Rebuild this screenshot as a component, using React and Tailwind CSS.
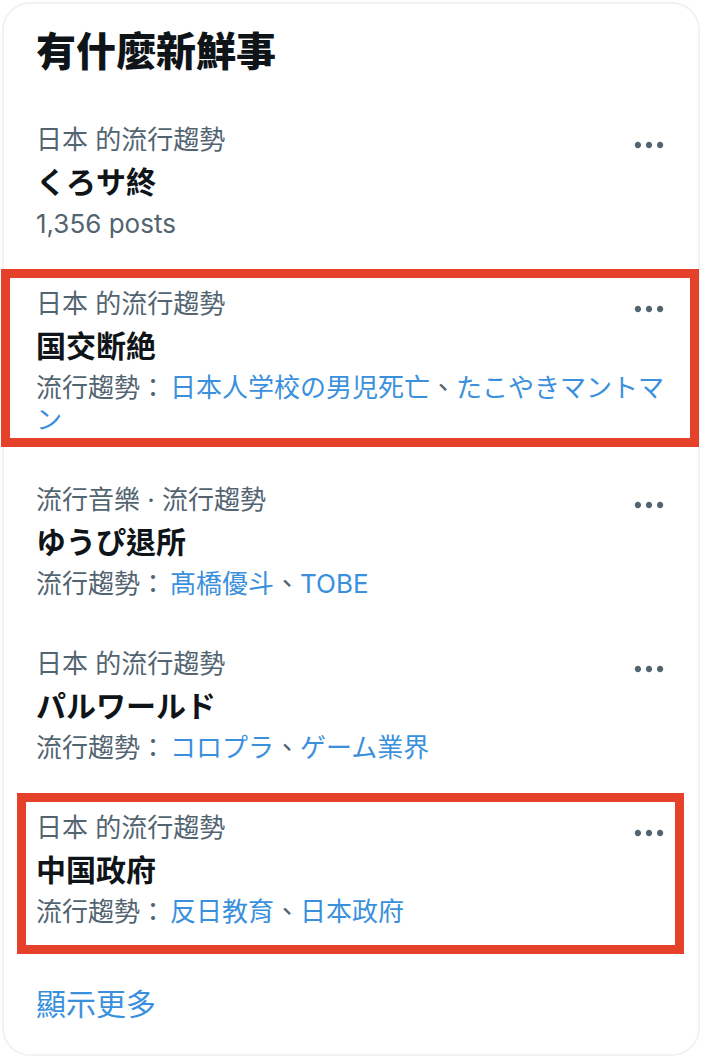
const FONT = {
  fontFamily: 'Inter, "Noto Sans CJK TC", "Noto Sans CJK JP", sans-serif',
}

const trends = [
  {
    id: 1,
    meta: "日本 的流行趨勢",
    title: "くろサ終",
    posts: "1,356 posts",
  },
  {
    id: 2,
    meta: "日本 的流行趨勢",
    title: "国交断絶",
    related: ["日本人学校の男児死亡", "たこやきマントマン"],
    mark: "wide",
  },
  {
    id: 3,
    meta: "流行音樂 · 流行趨勢",
    title: "ゆうぴ退所",
    related: ["髙橋優斗", "TOBE"],
  },
  {
    id: 4,
    meta: "日本 的流行趨勢",
    title: "パルワールド",
    related: ["コロプラ", "ゲーム業界"],
  },
  {
    id: 5,
    meta: "日本 的流行趨勢",
    title: "中国政府",
    related: ["反日教育", "日本政府"],
    mark: "narrow",
  },
]

function MoreIcon() {
  return (
    <svg
      viewBox="0 0 24 24"
      className="w-[38px] h-[38px] mt-[2px] shrink-0 fill-[#536471]"
    >
      <path d="M3 12c0-1.1.9-2 2-2s2 .9 2 2-.9 2-2 2-2-.9-2-2zm9 2c1.1 0 2-.9 2-2s-.9-2-2-2-2 .9-2 2 .9 2 2 2zm7 0c1.1 0 2-.9 2-2s-.9-2-2-2-2 .9-2 2 .9 2 2 2z" />
    </svg>
  )
}

function TrendRow({ trend }) {
  return (
    <div className="relative pl-8 pr-[30px] pt-6 pb-6">

      {/* annotation boxes */}
      {trend.mark === "wide" && (
        <div className="absolute top-[5px] -left-[3px] w-[698px] h-[178px] border-[9px] border-[#e5402a] pointer-events-none" />
      )}
      {trend.mark === "narrow" && (
        <div className="absolute top-[5px] left-[13px] w-[667px] h-[161px] border-[9px] border-[#e5402a] pointer-events-none" />
      )}

      <div className="flex items-start justify-between h-8">
        <p className="text-[26px] leading-8 text-[#536471]">
          {trend.meta}
        </p>
        <MoreIcon />
      </div>

      <p className="mt-[6px] text-[30px] leading-10 font-bold text-[#0f1419]">
        {trend.title}
      </p>

      {trend.posts && (
        <p className="mt-[6px] text-[26px] leading-8 text-[#536471]">
          {trend.posts}
        </p>
      )}

      {trend.related && (
        <p className="mt-[6px] text-[26px] leading-8 text-[#536471]">
          <span className="mr-[4px]">流行趨勢：</span>
          {trend.related.map((r, i) => (
            <span key={r}>
              {i > 0 && "、"}
              <span className="text-[#3a90dc]">{r}</span>
            </span>
          ))}
        </p>
      )}

    </div>
  )
}

export default function App() {
  return (
    <div
      className="bg-white min-h-screen pt-[2px] pl-[2px] pr-[4px]"
      style={FONT}
    >
      <div className="border-2 border-[#eff3f4] rounded-[28px] bg-white">

        {/* header */}
        <div className="pl-8 pr-[30px] py-6">
          <h2 className="text-[40px] leading-[48px] font-extrabold text-[#0f1419]">
            有什麼新鮮事
          </h2>
        </div>

        {trends.map((t) => (
          <TrendRow key={t.id} trend={t} />
        ))}

        {/* footer */}
        <div className="pl-8 pr-[30px] pt-8 pb-[30px]">
          <p className="text-[30px] leading-10 text-[#3a90dc]">
            顯示更多
          </p>
        </div>

      </div>
    </div>
  )
}
